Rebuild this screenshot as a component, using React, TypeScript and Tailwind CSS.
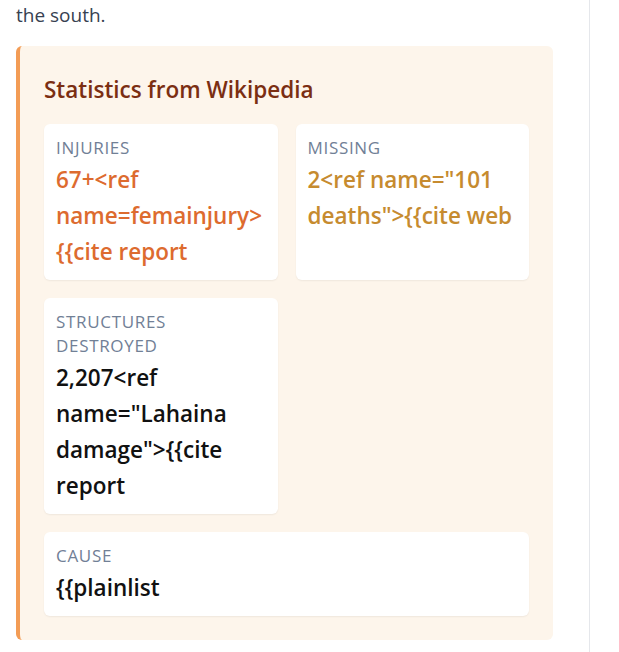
import React from "react";

const font = { fontFamily: '"Open Sans", "Noto Sans", sans-serif' };

function Card({ label, value, color, className = "" }: { label: string; value: string; color: string; className?: string }) {
  return (
    <div className={`bg-white rounded-md px-3 pt-3 pb-[10px] shadow-[0_1px_2px_rgba(0,0,0,0.06)] ${className}`}>
      <div className="text-[17px] leading-[24px] tracking-[0.04em] text-[#718096] uppercase">{label}</div>
      <div className={`pt-[2px] text-[22.5px] leading-[36px] font-semibold ${color}`}>{value}</div>
    </div>
  );
}

export default function App() {
  return (
    <div className="min-h-[652px] bg-white" style={font}>
      <div className="w-[590px] min-h-[652px] border-r border-[#e5e7eb] pl-4 pr-[36px]">
        <p className="text-[19px] leading-[30px] text-[#374151] mb-[16px]">the south.</p>
        <div className="bg-[#fdf5eb] border-l-4 border-[#f39c55] rounded-md p-6">
          <h3 className="pt-[2px] text-[22.5px] leading-[36px] font-semibold text-[#7b2e12] mb-[16px]">Statistics from Wikipedia</h3>
          <div className="grid grid-cols-2 gap-[18px]">
            <Card label="Injuries" value={'67+<ref name=femainjury> {{cite report'} color="text-[#dd6b2f]" />
            <Card label="Missing" value={'2<ref name="101 deaths">{{cite web'} color="text-[#c68b2f]" />
            <Card label="Structures destroyed" value={'2,207<ref name="Lahaina damage">{{cite report'} color="text-[#111111]" />
            <div />
            <Card label="Cause" value={'{{plainlist'} color="text-[#111111]" className="col-span-2" />
          </div>
        </div>
      </div>
    </div>
  );
}
